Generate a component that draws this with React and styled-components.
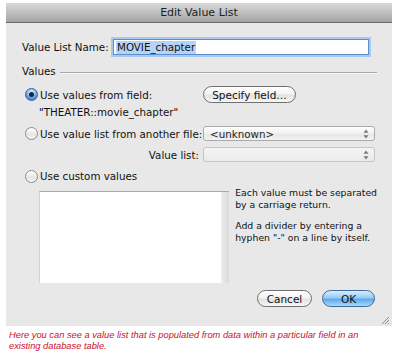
import React from 'react'
import styled, { createGlobalStyle } from 'styled-components'

const GlobalStyle = createGlobalStyle`
  html, body {
    margin: 0;
    padding: 0;
    background: #ffffff;
  }
  body {
    font-family: 'DejaVu Sans', 'Liberation Sans', sans-serif;
    -webkit-font-smoothing: antialiased;
  }
`

const Page = styled.div`
  width: 400px;
  height: 356px;
  padding: 3px 0 0 6px;
  box-sizing: border-box;
`

const Dialog = styled.div`
  position: relative;
  width: 386px;
  height: 323px;
  background: #e8e8e8;
  display: flex;
  flex-direction: column;
`

const TitleBar = styled.div`
  height: 19px;
  display: flex;
  align-items: center;
  justify-content: center;
  background: linear-gradient(#d8d8d8 0%, #bfbfbf 50%, #a3a3a3 100%);
  border-bottom: 1px solid #6a6a6a;
  font-size: 11px;
  color: #1e1e1e;
`

const Body = styled.div`
  padding: 14px 15px 0 16px;
  font-size: 10.3px;
  color: #111;
`

const NameRow = styled.div`
  height: 20px;
  display: flex;
  align-items: center;
`

const Label = styled.div`
  width: ${p => p.$w || 'auto'};
  text-align: ${p => p.$right ? 'right' : 'left'};
  padding-right: ${p => p.$right ? '4px' : '0'};
  box-sizing: border-box;
  white-space: nowrap;
`

const NameInput = styled.div`
  margin: 0 6px 0 2px;
  width: 256px;
  height: 16px;
  box-sizing: border-box;
  border: 1px solid #5c8ccc;
  box-shadow: 0 0 0 2px #a8c8f0;
  background: #fff;
  display: flex;
  align-items: center;
  padding-left: 2px;
`

const Selected = styled.span`
  background: #b5d3f7;
  padding: 0 1px;
  line-height: 13px;
`

const SectionHeader = styled.div`
  margin-top: 7px;
  height: 14px;
  display: flex;
  align-items: center;
  gap: 4px;
`

const Rule = styled.div`
  flex: 1;
  margin-top: 4px;
  border-top: 1px solid #a9a9a9;
  border-bottom: 1px solid #f8f8f8;
`

const OptionRow = styled.div`
  margin-top: ${p => p.$mt}px;
  height: ${p => p.$h}px;
  display: flex;
  align-items: center;
`

const RadioLabel = styled.label`
  width: 181px;
  display: flex;
  align-items: center;
  gap: 2px;
  white-space: nowrap;
`

const Radio = styled.span`
  position: relative;
  margin-left: 3px;
  width: 13px;
  height: 13px;
  box-sizing: border-box;
  border-radius: 50%;
  border: 1px solid ${p => p.$on ? '#2f5f9f' : '#8c8c8c'};
  background: ${p => p.$on
    ? 'radial-gradient(circle at 50% 30%, #e4f2ff 0%, #8cc3f2 40%, #3d86d6 75%, #6fb2ee 100%)'
    : 'linear-gradient(#ffffff, #e6e6e6 60%, #f6f6f6)'};
  &::after {
    content: '';
    display: ${p => p.$on ? 'block' : 'none'};
    position: absolute;
    left: 3px;
    top: 3px;
    width: 5px;
    height: 5px;
    border-radius: 50%;
    background: #1a2533;
  }
`

const FieldName = styled.div`
  margin-top: 2px;
  height: 14px;
  padding-left: 17px;
  display: flex;
  align-items: center;
`

const PillButton = styled.button`
  width: ${p => p.$w}px;
  height: 17px;
  padding: 0;
  border-radius: 9px;
  border: 1px solid ${p => p.$primary ? '#3f6a9e' : '#707070'};
  background: ${p => p.$primary
    ? 'linear-gradient(#d8eefe 0%, #98cbf4 45%, #5fa8ea 55%, #a8dafb 100%)'
    : 'linear-gradient(#ffffff 0%, #f3f3f3 45%, #e2e2e2 55%, #f7f7f7 100%)'};
  font-family: 'DejaVu Sans', sans-serif;
  font-size: 10.5px;
  color: #111;
  display: flex;
  align-items: center;
  justify-content: center;
`

const Select = styled.div`
  width: 172px;
  height: 15px;
  box-sizing: border-box;
  border: 1px solid ${p => p.$disabled ? '#c4c4c4' : '#aaaaaa'};
  border-radius: 3px;
  background: ${p => p.$disabled
    ? 'linear-gradient(#f4f4f4, #ebebeb)'
    : 'linear-gradient(#ffffff, #f0f0f0 50%, #e6e6e6 51%, #f2f2f2)'};
  display: flex;
  align-items: center;
  justify-content: space-between;
  padding: 0 5px 0 6px;
  color: #222;
`

const CustomRow = styled.div`
  margin-top: 4px;
  display: flex;
  align-items: flex-start;
  gap: 6px;
`

const TextArea = styled.div`
  margin: 4px 0 0 17px;
  width: 195px;
  height: 92px;
  background: #fff;
  border-top: 1px solid #a9a9a9;
  border-left: 1px solid #d2d2d2;
  box-sizing: border-box;
  display: flex;
  justify-content: flex-end;
`

const ScrollTrack = styled.div`
  width: 8px;
  background: linear-gradient(90deg, #ededed, #d9d9d9);
`

const Help = styled.div`
  font-size: 9.3px;
  line-height: 12px;
  color: #111;
  white-space: nowrap;
  p {
    margin: 0 0 9px;
  }
`

const ButtonRow = styled.div`
  margin-top: 7px;
  padding-right: 2px;
  display: flex;
  justify-content: flex-end;
  gap: 10px;
`

const Grip = styled.svg`
  position: absolute;
  right: 2px;
  bottom: 1px;
`

const Caption = styled.div`
  margin: 4px 0 0 3px;
  font-family: 'Liberation Sans', Arial, sans-serif;
  font-style: italic;
  font-size: 9.3px;
  line-height: 11px;
  color: #c8102e;
  width: 360px;
`

const Arrows = () => (
  <svg width='6' height='10' viewBox='0 0 6 10'>
    <path d='M3 0.5 L5.5 3.8 H0.5 Z' fill='#777' />
    <path d='M3 9.5 L5.5 6.2 H0.5 Z' fill='#777' />
  </svg>
)

const App = () => {
  return (
    <Page>
      <GlobalStyle />
      <Dialog>
        <TitleBar>Edit Value List</TitleBar>
        <Body>
          <NameRow>
            <Label $w='89px'>Value List Name:</Label>
            <NameInput>
              <Selected>MOVIE_chapter</Selected>
            </NameInput>
          </NameRow>

          <SectionHeader>
            <span>Values</span>
            <Rule />
          </SectionHeader>

          <OptionRow $mt={8} $h={17}>
            <RadioLabel>
              <Radio $on />
              Use values from field:
            </RadioLabel>
            <PillButton $w={93}>Specify field…</PillButton>
          </OptionRow>
          <FieldName>"THEATER::movie_chapter"</FieldName>

          <OptionRow $mt={7} $h={15}>
            <RadioLabel>
              <Radio />
              Use value list from another file:
            </RadioLabel>
            <Select>
              <span>&lt;unknown&gt;</span>
              <Arrows />
            </Select>
          </OptionRow>

          <OptionRow $mt={6} $h={15}>
            <Label $w='181px' $right>Value list:</Label>
            <Select $disabled>
              <span />
              <Arrows />
            </Select>
          </OptionRow>

          <OptionRow $mt={7} $h={14}>
            <RadioLabel>
              <Radio />
              Use custom values
            </RadioLabel>
          </OptionRow>

          <CustomRow>
            <TextArea>
              <ScrollTrack />
            </TextArea>
            <Help>
              <p>Each value must be separated<br />by a carriage return.</p>
              <p>Add a divider by entering a<br />hyphen "-" on a line by itself.</p>
            </Help>
          </CustomRow>

          <ButtonRow>
            <PillButton $w={55}>Cancel</PillButton>
            <PillButton $w={53} $primary>OK</PillButton>
          </ButtonRow>
        </Body>
        <Grip width='9' height='9' viewBox='0 0 9 9'>
          <path d='M8 1 L1 8 M8 4 L4 8 M8 7 L7 8' stroke='#8a8a8a' strokeWidth='1' />
        </Grip>
      </Dialog>
      <Caption>
        Here you can see a value list that is populated from data within a particular field in an existing database table.
      </Caption>
    </Page>
  )
}

export default App
